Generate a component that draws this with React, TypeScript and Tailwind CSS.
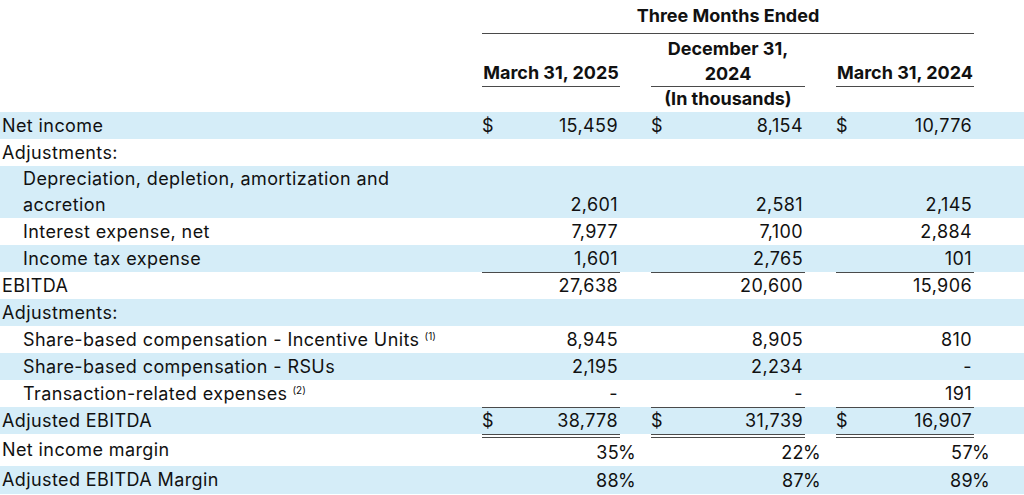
type Cell = { v: string; dollar?: boolean; pct?: boolean };

type Row = {
  label: string;
  sup?: string;
  indent?: boolean;
  blue?: boolean;
  tall?: boolean;
  topLine?: "single" | "double";
  values?: Cell[];
};

const rows: Row[] = [
  { label: "Net income", blue: true, values: [{ v: "15,459", dollar: true }, { v: "8,154", dollar: true }, { v: "10,776", dollar: true }] },
  { label: "Adjustments:" },
  { label: "Depreciation, depletion, amortization and accretion", indent: true, blue: true, tall: true, values: [{ v: "2,601" }, { v: "2,581" }, { v: "2,145" }] },
  { label: "Interest expense, net", indent: true, values: [{ v: "7,977" }, { v: "7,100" }, { v: "2,884" }] },
  { label: "Income tax expense", indent: true, blue: true, values: [{ v: "1,601" }, { v: "2,765" }, { v: "101" }] },
  { label: "EBITDA", topLine: "single", values: [{ v: "27,638" }, { v: "20,600" }, { v: "15,906" }] },
  { label: "Adjustments:", blue: true },
  { label: "Share-based compensation - Incentive Units", sup: "(1)", indent: true, values: [{ v: "8,945" }, { v: "8,905" }, { v: "810" }] },
  { label: "Share-based compensation - RSUs", indent: true, blue: true, values: [{ v: "2,195" }, { v: "2,234" }, { v: "-" }] },
  { label: "Transaction-related expenses", sup: "(2)", indent: true, values: [{ v: "-" }, { v: "-" }, { v: "191" }] },
  { label: "Adjusted EBITDA", blue: true, topLine: "single", values: [{ v: "38,778", dollar: true }, { v: "31,739", dollar: true }, { v: "16,907", dollar: true }] },
  { label: "Net income margin", topLine: "double", values: [{ v: "35", pct: true }, { v: "22", pct: true }, { v: "57", pct: true }] },
  { label: "Adjusted EBITDA Margin", blue: true, values: [{ v: "88", pct: true }, { v: "87", pct: true }, { v: "89", pct: true }] },
];

const ValueCell = ({ cell, line }: { cell?: Cell; line?: "single" | "double" }) => {
  const border =
    line === "single"
      ? "border-t border-[#4a4a4a]"
      : line === "double"
      ? "border-t-4 border-double border-[#4a4a4a]"
      : "";
  return (
    <td className={`p-0 align-bottom ${border}`}>
      {cell && (
        <div className={`flex justify-between ${cell.pct ? "pr-[1px]" : "pr-[2px]"}`}>
          <span>{cell.dollar ? "$" : ""}</span>
          <span>{cell.v}</span>
        </div>
      )}
    </td>
  );
};

const PctCell = ({ cell }: { cell?: Cell }) => (
  <td className="p-0 align-bottom">{cell?.pct ? <span className="-ml-[2px]">%</span> : null}</td>
);

export default function App() {
  return (
    <div
      className="w-[1024px] h-[495px] bg-white text-[#111] overflow-hidden"
      style={{ fontFamily: "Inter, 'Open Sans', sans-serif" }}
    >
      <table className="w-full table-fixed border-separate border-spacing-0 text-[18px] leading-[26px] tracking-[0.4px]">
        <colgroup>
          <col className="w-[482px]" />
          <col className="w-[138px]" />
          <col className="w-[31px]" />
          <col className="w-[154px]" />
          <col className="w-[31px]" />
          <col className="w-[138px]" />
          <col className="w-[50px]" />
        </colgroup>
        <thead className="font-bold tracking-normal">
          <tr className="h-[34px]">
            <th />
            <th colSpan={5} className="border-b border-[#4a4a4a] p-0 pt-[3px] align-top text-center font-bold">
              Three Months Ended
            </th>
            <th />
          </tr>
          <tr className="h-[53px]">
            <th />
            <th className="border-b border-[#4a4a4a] p-0 align-bottom text-center">March 31, 2025</th>
            <th />
            <th className="border-b border-[#4a4a4a] p-0 align-bottom text-center leading-[25px]">
              December 31,
              <br />
              2024
            </th>
            <th />
            <th className="border-b border-[#4a4a4a] p-0 align-bottom text-center">March 31, 2024</th>
            <th />
          </tr>
          <tr className="h-[25px]">
            <th />
            <th />
            <th />
            <th className="p-0 text-center align-top leading-[24px]">(In thousands)</th>
            <th />
            <th />
            <th />
          </tr>
        </thead>
        <tbody>
          {rows.map((r, i) => (
            <tr
              key={i}
              className={`${r.blue ? "bg-[#d5edf8]" : "bg-white"} ${
                r.tall ? "h-[52px]" : r.topLine === "double" ? "h-[32px]" : i === rows.length - 1 ? "h-[28px]" : "h-[27px]"
              }`}
            >
              <td className={`p-0 align-middle ${r.indent ? "pl-[23px]" : "pl-[2px]"} ${r.tall ? "pr-[70px]" : ""}`}>
                {r.label}
                {r.sup && <sup className="ml-[5px] text-[10px] tracking-normal -top-[6px]">{r.sup}</sup>}
              </td>
              <ValueCell cell={r.values?.[0]} line={r.topLine} />
              <PctCell cell={r.values?.[0]} />
              <ValueCell cell={r.values?.[1]} line={r.topLine} />
              <PctCell cell={r.values?.[1]} />
              <ValueCell cell={r.values?.[2]} line={r.topLine} />
              <PctCell cell={r.values?.[2]} />
            </tr>
          ))}
        </tbody>
      </table>
    </div>
  );
}
